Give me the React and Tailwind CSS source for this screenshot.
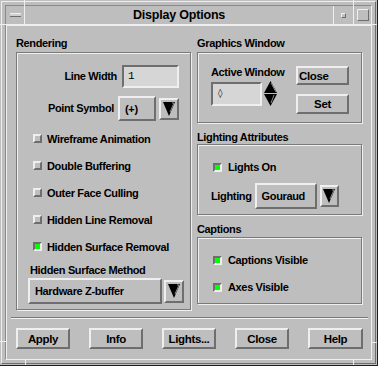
import React from "react";

const raised = "border-2 border-t-[#efefef] border-l-[#efefef] border-r-[#6e6e6e] border-b-[#6e6e6e]";
const sunken = "border-2 border-t-[#6e6e6e] border-l-[#6e6e6e] border-r-[#efefef] border-b-[#efefef]";
const etched = "border border-[#7a7a7a] shadow-[inset_1px_1px_0_#efefef,1px_1px_0_#efefef]";

function Toggle({ on, label, gap = "gap-[5px]" }) {
  return (
    <div className={`flex items-center h-[14px] ${gap}`}>
      <span
        className={`w-[9px] h-[9px] ${on ? sunken + " bg-[#00ff00]" : raised + " bg-[#bebebe]"}`}
      />
      <span className="leading-[14px] whitespace-nowrap">{label}</span>
    </div>
  );
}

function ArrowBtn({ w, h }) {
  return (
    <div className={`${w} ${h} ${raised} flex items-center justify-center bg-[#bebebe]`}>
      <svg width="12" height="14" viewBox="0 0 12 14">
        <polygon points="0,0 12,0 6,14" fill="#000" />
        <polyline points="9,1 11,1 7,10" fill="none" stroke="#8c8c8c" strokeWidth="1" />
      </svg>
    </div>
  );
}

function Option({ w, h, children }) {
  return (
    <div className={`${w} ${h} ${raised} flex items-center pl-[5px] leading-[14px] whitespace-nowrap`}>{children}</div>
  );
}

function Btn({ w = "w-[54px]", h = "h-[21px]", left, children }) {
  return (
    <div
      className={`${w} ${h} ${raised} flex items-center ${left ? "justify-start pl-[1px]" : "justify-center"} text-[11.5px] leading-[14px]`}
    >
      {children}
    </div>
  );
}

function Label({ children, className = "" }) {
  return <div className={`h-[14px] leading-[14px] whitespace-nowrap ${className}`}>{children}</div>;
}

export default function App() {
  return (
    <div className="w-[378px] h-[366px] bg-[#bebebe] border-r border-b border-[#1e1e1e] p-px relative font-['Liberation_Sans',Arial,sans-serif] font-bold text-[11px] tracking-[-0.35px] text-black">
      {/* window frame */}
      <div className="h-full border border-t-[#efefef] border-l-[#efefef] border-r-[#6e6e6e] border-b-[#6e6e6e] p-[3px]">
        <div className="h-full border border-t-[#8a8a8a] border-l-[#8a8a8a] border-r-[#efefef] border-b-[#efefef] flex flex-col">
          {/* title bar */}
          <div className="flex h-[19px] border-b border-[#efefef]">
            <div className="w-[19px] border-r border-[#efefef] flex items-center justify-center">
              <span className="w-[11px] h-[4px] bg-[#cfcfcf] border-t border-[#efefef] border-b-[#6e6e6e] border-b" />
            </div>
            <div className="flex-1 border-r border-[#efefef] flex items-center justify-center text-[12.5px] tracking-[-0.2px]">
              Display Options
            </div>
            <div className="w-[20px] border-r border-[#efefef] flex items-center justify-center">
              <span className="w-[5px] h-[5px] border border-t-[#efefef] border-l-[#efefef] border-r-[#6e6e6e] border-b-[#6e6e6e]" />
            </div>
            <div className="w-[17px] flex items-center justify-center">
              <span className="w-[12px] h-[12px] border border-t-[#efefef] border-l-[#efefef] border-r-[#6e6e6e] border-b-[#6e6e6e]" />
            </div>
          </div>

          {/* client */}
          <div className="flex-1 border-l border-t border-[#efefef] flex flex-col">
            <div className="flex pt-[10px] pl-[9px]">
              {/* left column */}
              <div className="w-[175px]">
                <Label className="mb-[2px]">Rendering</Label>
                <div className={`h-[258px] ${etched}`}>
                  <div className="flex items-center justify-end pr-[11px] mt-[12px] gap-[5px]">
                    <span>Line Width</span>
                    <div className={`w-[57px] h-[23px] ${sunken} bg-[#d6d6d6] pl-[4px] flex items-center font-['Liberation_Mono',monospace] font-normal`}>
                      1
                    </div>
                  </div>
                  <div className="flex items-center justify-end pr-[11px] mt-[8px]">
                    <span className="mr-[4px]">Point Symbol</span>
                    <Option w="w-[38px]" h="h-[25px]">(+)</Option>
                    <div className="ml-[3px]">
                      <ArrowBtn w="w-[20px]" h="h-[22px]" />
                    </div>
                  </div>
                  <div className="mt-[4px] pl-[16px]">
                    {[
                      ["Wireframe Animation", false],
                      ["Double Buffering", false],
                      ["Outer Face Culling", false],
                      ["Hidden Line Removal", false],
                      ["Hidden Surface Removal", true],
                    ].map(([t, on]) => (
                      <div key={t} className="h-[27px] flex items-center">
                        <Toggle on={on} label={t} />
                      </div>
                    ))}
                  </div>
                  <Label className="mt-[3px] pl-[13px]">Hidden Surface Method</Label>
                  <div className="flex items-center pl-[11px] mt-px">
                    <Option w="w-[134px]" h="h-[26px]">Hardware Z-buffer</Option>
                    <div className="ml-[2px]">
                      <ArrowBtn w="w-[20px]" h="h-[23px]" />
                    </div>
                  </div>
                </div>
              </div>

              {/* right column */}
              <div className="w-[165px] ml-[6px]">
                <Label className="mb-[2px]">Graphics Window</Label>
                <div className={`h-[71px] ${etched} flex`}>
                  <div className="w-[79px] shrink-0 pl-[13px] pt-[12px]">
                    <Label>Active Window</Label>
                    <div className="flex items-center mt-[2px] gap-[2px]">
                      <div className={`w-[51px] h-[24px] ${sunken} bg-[#d6d6d6] pl-[5px] flex items-center font-['DejaVu_Sans',sans-serif] font-normal text-[9px]`}>
                        ◊
                      </div>
                      <svg width="13" height="25" viewBox="0 0 13 25">
                        <polygon points="6.5,0 13,12 0,12" fill="#000" />
                        <line x1="7" y1="2" x2="12" y2="11" stroke="#8c8c8c" />
                        <polygon points="0,13 13,13 6.5,25" fill="#000" />
                        <line x1="10" y1="14" x2="7" y2="22" stroke="#8c8c8c" />
                      </svg>
                    </div>
                  </div>
                  <div className="ml-[19px] pt-[13px] flex flex-col gap-[9px]">
                    <Btn w="w-[53px]" h="h-[19px]" left>
                      Close
                    </Btn>
                    <Btn w="w-[53px]" h="h-[20px]">
                      Set
                    </Btn>
                  </div>
                </div>

                <Label className="mt-[7px]">Lighting Attributes</Label>
                <div className={`h-[71px] ${etched}`}>
                  <div className="pl-[15px] mt-[15px]">
                    <Toggle on label="Lights On" gap="gap-[6px]" />
                  </div>
                  <div className="flex items-center pl-[13px] mt-[9px]">
                    <span className="mr-[3px]">Lighting</span>
                    <Option w="w-[62px]" h="h-[26px]">Gouraud</Option>
                    <div className="ml-[3px]">
                      <ArrowBtn w="w-[19px]" h="h-[22px]" />
                    </div>
                  </div>
                </div>

                <Label className="mt-[7px] mb-px">Captions</Label>
                <div className={`h-[67px] ${etched}`}>
                  <div className="pl-[15px] mt-[15px]">
                    <Toggle on label="Captions Visible" gap="gap-[6px]" />
                  </div>
                  <div className="pl-[15px] mt-[13px]">
                    <Toggle on label="Axes Visible" gap="gap-[6px]" />
                  </div>
                </div>
              </div>
            </div>

            <div className="ml-[4px] w-[357px] mt-[7px] border-t border-b border-t-[#7a7a7a] border-b-[#efefef]" />

            <div className="flex gap-[19px] pl-[9px] mt-[9px]">
              <Btn>Apply</Btn>
              <Btn>Info</Btn>
              <Btn>Lights...</Btn>
              <Btn>Close</Btn>
              <Btn w="w-[55px]">Help</Btn>
            </div>
          </div>
        </div>
      </div>

      {/* corner resize marks on the frame */}
      <span className="absolute left-[24px] top-0 w-px h-[6px] bg-[#efefef]" />
      <span className="absolute left-0 top-[24px] w-[6px] h-px bg-[#efefef]" />
      <span className="absolute left-[353px] top-0 w-px h-[6px] bg-[#efefef]" />
      <span className="absolute left-[371px] top-[24px] w-[6px] h-px bg-[#efefef]" />
      <span className="absolute left-0 top-[341px] w-[6px] h-px bg-[#efefef]" />
      <span className="absolute left-[25px] top-[359px] w-px h-[6px] bg-[#efefef]" />
      <span className="absolute left-[371px] top-[342px] w-[6px] h-px bg-[#efefef]" />
      <span className="absolute left-[353px] top-[359px] w-px h-[6px] bg-[#efefef]" />
    </div>
  );
}
